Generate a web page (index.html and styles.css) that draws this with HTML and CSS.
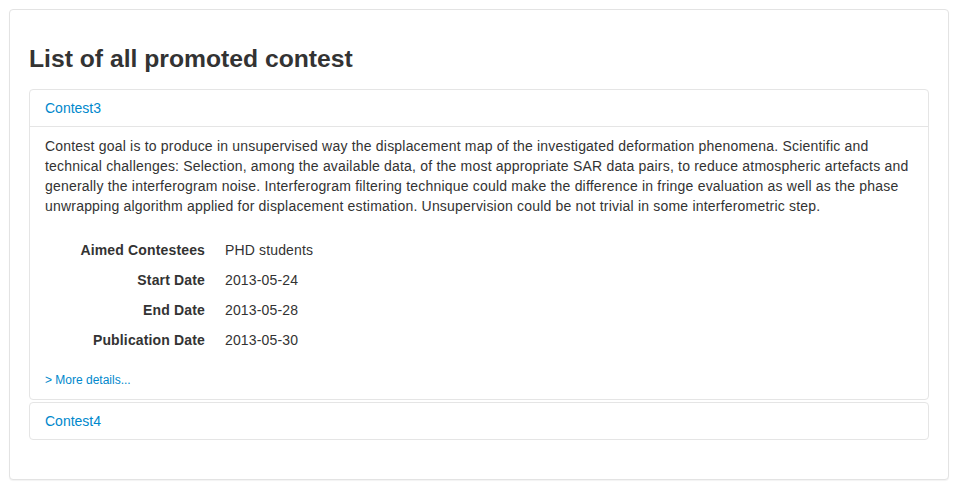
FILE: index.html
```html
<!DOCTYPE html>
<html>
<head>
<meta charset="utf-8">
<link rel="stylesheet" href="styles.css">
</head>
<body>
<div class="well">
  <h2 class="title">List of all promoted contest</h2>
  <div class="accordion">
    <div class="group">
      <div class="group-head"><a class="toggle" href="#">Contest3</a></div>
      <div class="group-body">
        <p class="desc">Contest goal is to produce in unsupervised way the displacement map of the investigated deformation phenomena. Scientific and technical challenges: Selection, among the available data, of the most appropriate SAR data pairs, to reduce atmospheric artefacts and generally the interferogram noise. Interferogram filtering technique could make the difference in fringe evaluation as well as the phase unwrapping algorithm applied for displacement estimation. Unsupervision could be not trivial in some interferometric step.</p>
        <dl class="facts">
          <dt>Aimed Contestees</dt><dd>PHD students</dd>
          <dt>Start Date</dt><dd>2013-05-24</dd>
          <dt>End Date</dt><dd>2013-05-28</dd>
          <dt>Publication Date</dt><dd>2013-05-30</dd>
        </dl>
        <a class="more" href="#">&gt; More details...</a>
      </div>
    </div>
    <div class="group">
      <div class="group-head"><a class="toggle" href="#">Contest4</a></div>
    </div>
  </div>
</div>
</body>
</html>
```
FILE: styles.css
```css
html, body {
  margin: 0;
  padding: 0;
  background: #fff;
}
body {
  padding: 9px 7px 8px 9px;
  font-family: "Liberation Sans", Arial, Helvetica, sans-serif;
  font-size: 14px;
  line-height: 20px;
  color: #333;
}
a {
  color: #0088cc;
  text-decoration: none;
}
.well {
  width: 900px;
  padding: 19px;
  border: 1px solid #e3e3e3;
  border-radius: 4px;
  background: #fff;
  box-shadow: 0 1px 1px rgba(0, 0, 0, 0.05);
}
.title {
  margin: 10px 0;
  font-size: 24.7px;
  line-height: 40px;
  font-weight: bold;
  color: #333;
}
.accordion {
  margin-bottom: 20px;
}
.group {
  border: 1px solid #e5e5e5;
  border-radius: 4px;
  margin-bottom: 2px;
}
.group:last-child {
  margin-bottom: 0;
}
.toggle {
  display: block;
  padding: 8px 15px;
}
.group-body {
  border-top: 1px solid #e5e5e5;
  padding: 9px 15px;
}
.desc {
  margin: 0;
  letter-spacing: 0.2px;
}
.facts {
  display: grid;
  grid-template-columns: 160px auto;
  column-gap: 20px;
  row-gap: 10px;
  margin: 24px 0 20px;
  letter-spacing: 0.15px;
}
.facts dt {
  font-weight: bold;
  text-align: right;
}
.facts dd {
  margin: 0;
}
.more {
  display: block;
  font-size: 12px;
  line-height: 20px;
}
```
